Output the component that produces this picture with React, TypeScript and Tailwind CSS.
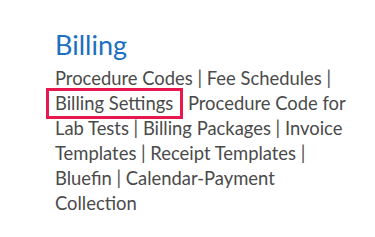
import React from "react";

export default function App() {
  return (
    <div className="w-[375px] h-[237px] bg-white overflow-hidden" style={{ fontFamily: "Lato, 'Noto Sans', sans-serif" }}>
      <div className="pl-[55px] pt-[28px] w-[360px]">
        <h2 className="text-[27px] leading-[34px] text-[#1d6fbf] font-normal">Billing</h2>
        <p className="mt-[4px] text-[18.4px] leading-[25px] text-[#4a4a4a]">
          Procedure Codes | Fee Schedules |{" "}
          <span className="whitespace-nowrap border-[3px] border-[#e8184e] -ml-[9px] pl-[6px] pr-[7px] pt-[1px] pb-[2px]">Billing Settings</span>{" "}
          Procedure Code for Lab Tests | Billing Packages | Invoice Templates | Receipt Templates | Bluefin | Calendar-Payment Collection
        </p>
      </div>
    </div>
  );
}
